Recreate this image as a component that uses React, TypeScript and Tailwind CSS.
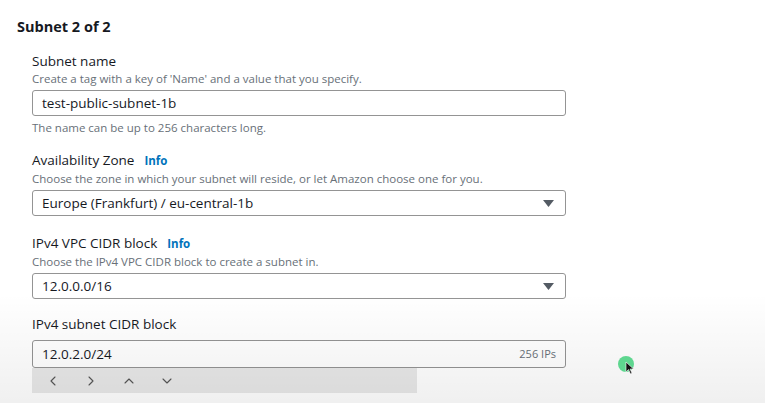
import { ChevronLeft, ChevronRight, ChevronUp, ChevronDown } from 'lucide-react'

function Caret() {
  return (
    <svg width="11" height="7" viewBox="0 0 11 7" className="text-[#545b64]">
      <path d="M0 0 H11 L5.5 7 Z" fill="currentColor" />
    </svg>
  )
}

function Label({ text, info }: { text: string; info?: boolean }) {
  return (
    <div className="flex items-baseline text-[13.5px] leading-[20px] text-[#16191f]">
      <span>{text}</span>
      {info && <span className="ml-[10px] text-[11.5px] font-bold text-[#0073bb]">Info</span>}
    </div>
  )
}

function Desc({ text }: { text: string }) {
  return <div className="text-[11.5px] leading-[16px] text-[#687078]">{text}</div>
}

function Box({ children, select }: { children: React.ReactNode; select?: boolean }) {
  return (
    <div className="mt-[3px] flex h-[26px] w-[534px] items-center justify-between rounded-[3px] border border-[#949494] bg-white pl-[9px] pr-[11px] text-[13.5px] text-[#16191f]">
      <span>{children}</span>
      {select && <Caret />}
    </div>
  )
}

export default function App() {
  return (
    <div
      className="relative h-[403px] w-[765px] overflow-hidden bg-white"
      style={{ fontFamily: '"Open Sans", "Noto Sans", sans-serif' }}
    >
      <div className="pl-[17px] pt-[17px]">
        <h2 className="text-[14.5px] font-bold leading-[20px] text-[#16191f]">Subnet 2 of 2</h2>

        <div className="pl-[15px]">
          <div className="mt-[14px]">
            <Label text="Subnet name" />
            <Desc text="Create a tag with a key of 'Name' and a value that you specify." />
            <Box>test-public-subnet-1b</Box>
            <div className="mt-[4px] text-[11.5px] leading-[16px] text-[#687078]">
              The name can be up to 256 characters long.
            </div>
          </div>

          <div className="mt-[14px]">
            <Label text="Availability Zone" info />
            <Desc text="Choose the zone in which your subnet will reside, or let Amazon choose one for you." />
            <Box select>Europe (Frankfurt) / eu-central-1b</Box>
          </div>

          <div className="mt-[17px]">
            <Label text="IPv4 VPC CIDR block" info />
            <Desc text="Choose the IPv4 VPC CIDR block to create a subnet in." />
            <Box select>12.0.0.0/16</Box>
          </div>

          <div className="mt-[15px]">
            <Label text="IPv4 subnet CIDR block" />
            <div className="mt-[6px] flex h-[28px] w-[534px] items-center justify-between rounded-[3px] border border-[#949494] bg-white pl-[9px] pr-[9px] text-[13.5px] text-[#16191f]">
              <span>12.0.2.0/24</span>
              <span className="text-[11px] text-[#687078]">256 IPs</span>
            </div>
            <div className="flex h-[25px] w-[385px] items-center gap-[22px] bg-[#e8e8e8] pl-[13px] text-[#555]">
              <ChevronLeft size={16} strokeWidth={1.6} />
              <ChevronRight size={16} strokeWidth={1.6} />
              <ChevronUp size={16} strokeWidth={1.6} />
              <ChevronDown size={16} strokeWidth={1.6} />
            </div>
          </div>
        </div>
      </div>

      <div className="pointer-events-none absolute inset-x-0 bottom-0 h-[110px] bg-gradient-to-b from-transparent to-black/[0.06]" />

      <div className="pointer-events-none absolute left-[618px] top-[356px] h-[16px] w-[16px] rounded-full bg-[#5ed68f]" />
      <svg className="absolute left-[625px] top-[361px]" width="9" height="14" viewBox="0 0 9 14">
        <path d="M1 1 L1 11 L3.5 8.5 L5.5 13 L7 12.3 L5 8 L8.5 8 Z" fill="#111" stroke="#fff" strokeWidth="0.6" />
      </svg>
    </div>
  )
}
